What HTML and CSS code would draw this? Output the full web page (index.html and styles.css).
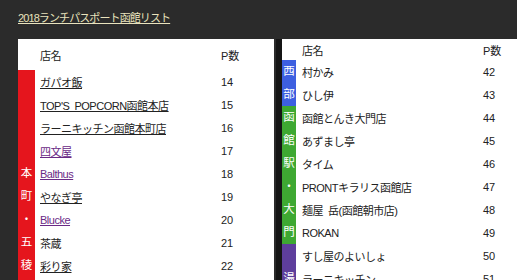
FILE: index.html
```html
<!DOCTYPE html>
<html lang="ja">
<head>
<meta charset="utf-8">
<title>2018ランチパスポート函館リスト</title>
<link rel="stylesheet" href="styles.css">
</head>
<body>
<div class="page">
  <h1 class="title"><a href="#">2018ランチパスポート函館リスト</a></h1>
  <div class="panels">
    <div class="panel panel-left">
      <table class="list">
        <colgroup><col class="c-cat"><col class="c-name"><col></colgroup>
        <thead>
          <tr class="head tall"><th></th><th class="name">店名</th><th class="num">P数</th></tr>
        </thead>
        <tbody>
          <tr><td class="cat red" rowspan="14"><span class="ch">本</span><span class="ch">町</span><span class="ch">・</span><span class="ch">五</span><span class="ch">稜</span><span class="ch">郭</span></td><td class="name"><a href="#">ガパオ飯</a></td><td class="num">14</td></tr>
          <tr><td class="name"><a href="#">TOP'S&nbsp;&nbsp;POPCORN函館本店</a></td><td class="num">15</td></tr>
          <tr><td class="name"><a href="#">ラーニキッチン函館本町店</a></td><td class="num">16</td></tr>
          <tr><td class="name"><a class="visited" href="#">四文屋</a></td><td class="num">17</td></tr>
          <tr><td class="name"><a class="visited" href="#">Balthus</a></td><td class="num">18</td></tr>
          <tr><td class="name"><a href="#">やなぎ亭</a></td><td class="num">19</td></tr>
          <tr><td class="name"><a class="visited" href="#">Blucke</a></td><td class="num">20</td></tr>
          <tr><td class="name">茶蔵</td><td class="num">21</td></tr>
          <tr><td class="name"><a href="#">彩り家</a></td><td class="num">22</td></tr>
          <tr><td class="name"><a href="#">はこだて</a></td><td class="num">23</td></tr>
          <tr><td class="name"><a href="#">五稜郭</a></td><td class="num">24</td></tr>
          <tr><td class="name"><a href="#">本町</a></td><td class="num">25</td></tr>
          <tr><td class="name"><a href="#">函館</a></td><td class="num">26</td></tr>
          <tr><td class="name"><a href="#">食堂</a></td><td class="num">27</td></tr>
        </tbody>
      </table>
    </div>
    <div class="panel panel-right">
      <table class="list">
        <colgroup><col class="c-cat2"><col class="c-name2"><col></colgroup>
        <thead>
          <tr class="head"><th></th><th class="name">店名</th><th class="num">P数</th></tr>
        </thead>
        <tbody>
          <tr><td class="cat blue" rowspan="2"><span class="ch">西</span><span class="ch">部</span></td><td class="name">村かみ</td><td class="num">42</td></tr>
          <tr><td class="name">ひし伊</td><td class="num">43</td></tr>
          <tr><td class="cat green" rowspan="6"><span class="ch">函</span><span class="ch">館</span><span class="ch">駅</span><span class="ch">・</span><span class="ch">大</span><span class="ch">門</span></td><td class="name">函館とんき大門店</td><td class="num">44</td></tr>
          <tr><td class="name">あずまし亭</td><td class="num">45</td></tr>
          <tr><td class="name">タイム</td><td class="num">46</td></tr>
          <tr><td class="name">PRONTキラリス函館店</td><td class="num">47</td></tr>
          <tr><td class="name">麺屋&nbsp;&nbsp;岳(函館朝市店)</td><td class="num">48</td></tr>
          <tr><td class="name">ROKAN</td><td class="num">49</td></tr>
          <tr><td class="cat purple" rowspan="5"><span class="ch">湯</span><span class="ch">の</span><span class="ch">川</span></td><td class="name">すし屋のよいしょ</td><td class="num">50</td></tr>
          <tr><td class="name">ラーニキッチン</td><td class="num">51</td></tr>
          <tr><td class="name">湯の川</td><td class="num">52</td></tr>
          <tr><td class="name">温泉</td><td class="num">53</td></tr>
          <tr><td class="name">食堂</td><td class="num">54</td></tr>
        </tbody>
      </table>
    </div>
  </div>
</div>
</body>
</html>
```

FILE: styles.css
```css
html, body {
  margin: 0;
  padding: 0;
  background: #2b2b2b;
}

body {
  font-family: "Liberation Sans", "Noto Sans CJK JP", sans-serif;
  font-size: 11px;
  color: #222;
  overflow: hidden;
}

.page {
  padding: 12px 0 0 18px;
}

.title {
  margin: 0;
  height: 27px;
  font-size: 11px;
  font-weight: normal;
  line-height: 13px;
}

.title a {
  color: #e9e3bd;
  text-decoration: underline;
  letter-spacing: -0.9px;
}

.panels {
  display: flex;
  gap: 2px;
  align-items: flex-start;
}

.panel {
  background: #fff;
}

.panel-left {
  width: 256px;
}

.panel-right {
  flex: 1;
  border-left: 6px solid #151515;
}

.list {
  border-collapse: collapse;
  width: 100%;
  table-layout: fixed;
}

.c-cat { width: 17px; }
.c-name { width: 184px; }
.c-cat2 { width: 14px; }
.c-name2 { width: 185px; }

.list th,
.list td {
  padding: 0;
  height: 23px;
  font-weight: normal;
  text-align: left;
  vertical-align: middle;
  white-space: nowrap;
}

.list .head th {
  height: 21px;
}

.list .head.tall th {
  height: 31px;
}

.list .name {
  padding-left: 5px;
  letter-spacing: -0.5px;
}

.panel-right .list .name {
  padding-left: 6px;
}

.list .num {
  padding-left: 2px;
}

.list a {
  color: #222;
  text-decoration: underline;
}

.list a.visited {
  color: #6a2a86;
}

.list .cat {
  color: #fff;
  text-align: center;
}

.cat .ch {
  display: block;
  line-height: 23px;
  font-size: 11.5px;
}

.red { background: #e5151d; }
.blue { background: #3d5fe0; }
.green { background: #3ea832; }
.purple { background: #5e3e9c; }
```
